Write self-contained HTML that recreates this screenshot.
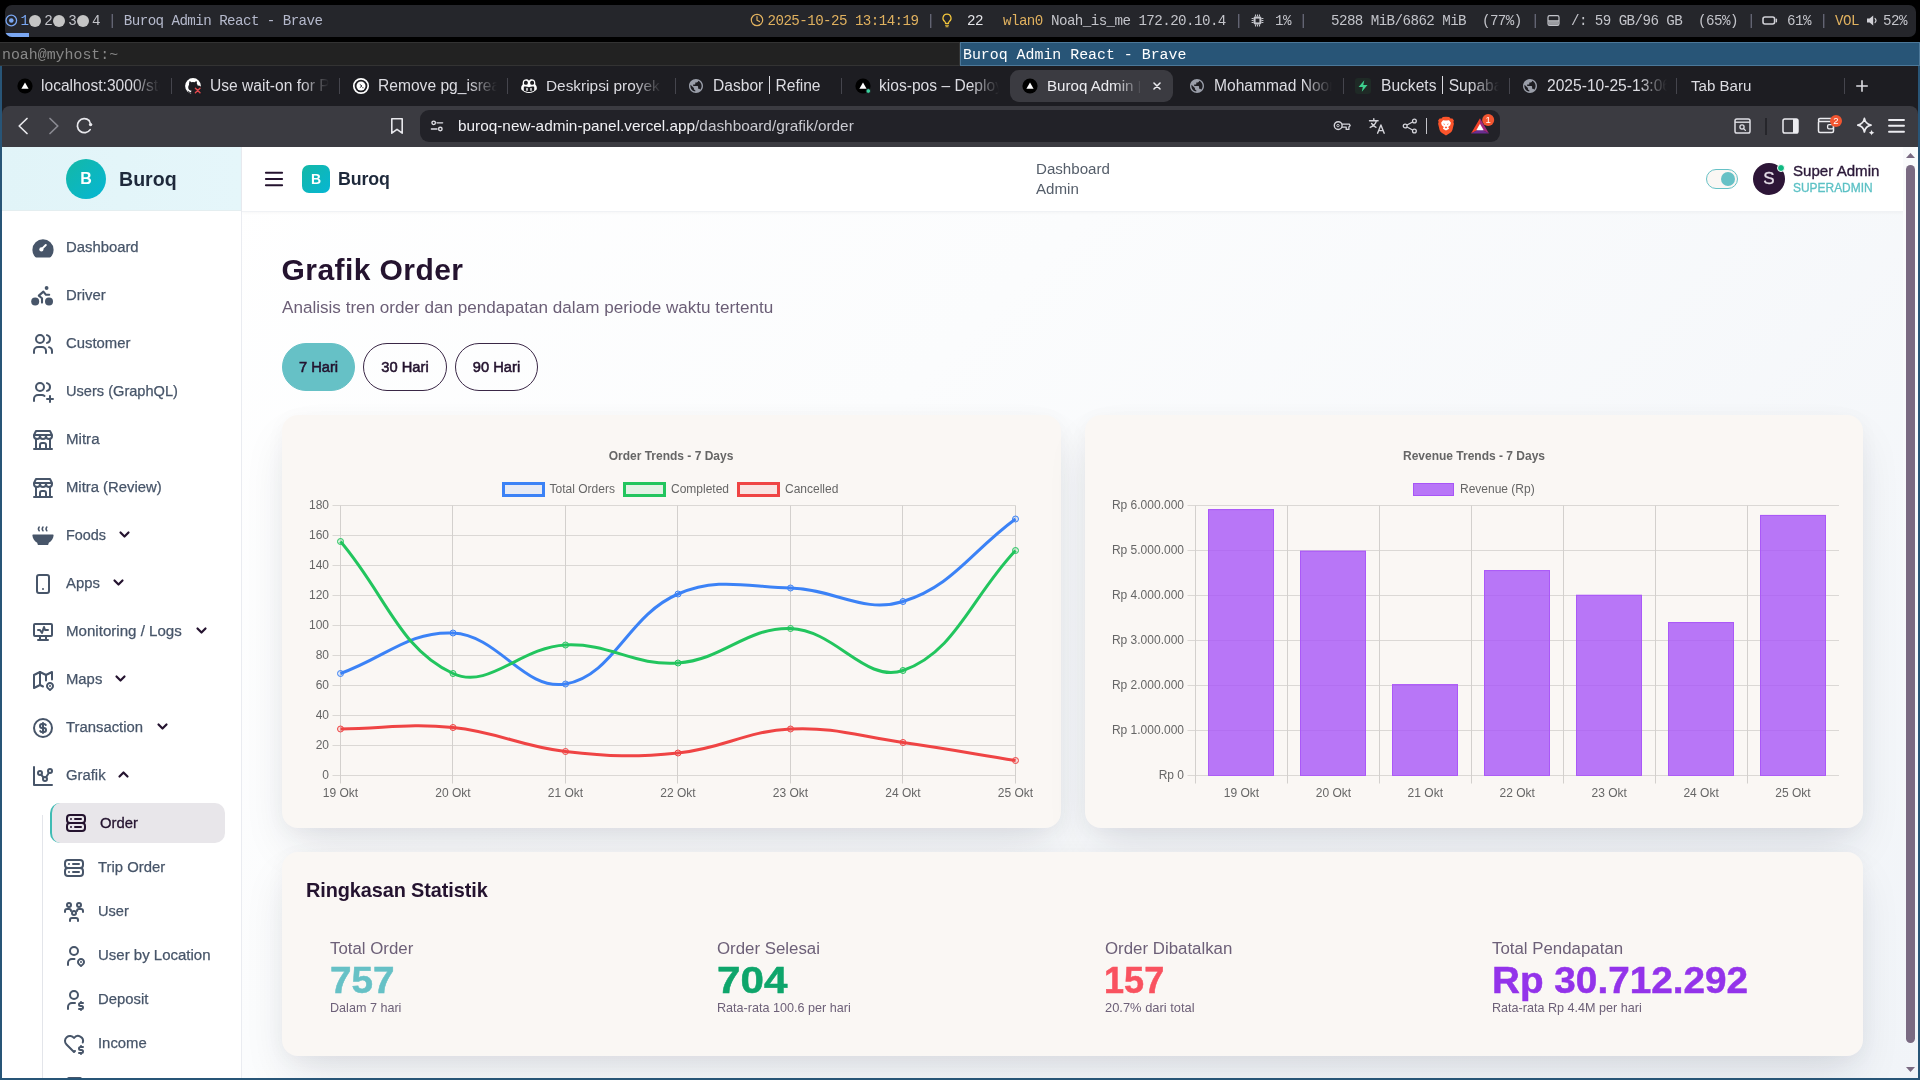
<!DOCTYPE html>
<html lang="id">
<head>
<meta charset="utf-8">
<title>Buroq Admin React</title>
<style>
*{box-sizing:border-box;margin:0;padding:0}
html,body{width:1920px;height:1080px;overflow:hidden;background:#000;font-family:"Liberation Sans",sans-serif;}
#root{position:absolute;left:0;top:0;width:1920px;height:1080px;will-change:transform;background:#000;overflow:hidden}
.abs{position:absolute}
.mono{font-family:"Liberation Mono",monospace;white-space:pre}
svg{display:block;overflow:visible}
svg.chart{position:absolute}
/* ---------- i3 status bar ---------- */
#bar{position:absolute;left:5px;top:5px;width:1911px;height:32px;background:#25262b;border-radius:7px;overflow:hidden}
#bar .t{position:absolute;top:0;height:32px;line-height:33px;font-family:"Liberation Mono",monospace;font-size:14.2px;letter-spacing:-.57px;white-space:pre;color:#b5b9cc}
#bar .y{color:#e0b15f}
#bar .w{color:#e4e4e8}
#bar .g{color:#c3c4ca}
#bar .sep{color:#6e7080}
/* ---------- i3 title row ---------- */
#ttl-l{position:absolute;left:0;top:42px;width:960px;height:24px;background:#222222;border:1px solid #333333;border-left:none}
#ttl-r{position:absolute;left:960px;top:42px;width:960px;height:24px;background:#285577;border:1px solid #4c7899}
.ttl{position:absolute;top:0;line-height:24px;font-family:"Liberation Mono",monospace;font-size:14.9px;white-space:pre}
/* ---------- browser ---------- */
#win{position:absolute;left:0;top:66px;width:1920px;height:1014px;background:#285577}
#tabs{position:absolute;left:2px;top:0;width:1916px;height:52px;background:#1d1d22}
#tool{position:absolute;left:2px;top:40px;width:1916px;height:41px;background:#3b3b41;border-radius:8px 8px 0 0}
.tab{position:absolute;top:0;height:40px;line-height:40px;font-size:15.6px;color:#dcdce2;white-space:nowrap;overflow:hidden}
.tab.fade{-webkit-mask-image:linear-gradient(90deg,#000 0,#000 calc(100% - 28px),transparent 100%);mask-image:linear-gradient(90deg,#000 0,#000 calc(100% - 28px),transparent 100%)}
.tsep{position:absolute;top:12px;width:1px;height:16px;background:#45454d}
.fav{position:absolute}
#url{position:absolute;left:418px;top:4px;width:1080px;height:32px;border-radius:9px;background:#222228}
/* ---------- page ---------- */
#page{position:absolute;left:2px;top:81px;width:1916px;height:931px;background:#fff;overflow:hidden}
#main{position:absolute;left:239px;top:0;width:1664px;height:931px;background:linear-gradient(135deg,#ffffff 0%,#fbfcfd 35%,#f1f4f8 100%)}
#side{position:absolute;left:0;top:0;width:239px;height:931px;background:#fff}
#side:after{content:'';position:absolute;left:239px;top:0;width:1px;height:931px;background:#eaecf1}
#side-h{position:absolute;left:0;top:0;width:239px;height:64px;background:linear-gradient(90deg,#e1f4f8,#e5f6fa);border-bottom:1px solid #e4eef0}
#hdr{position:absolute;left:240px;top:0;width:1663px;height:65px;background:#fff;border-bottom:1px solid #f0f2f5;box-shadow:0 1px 3px rgba(0,0,0,.03)}
.mi{position:absolute;left:64px;font-size:14.85px;color:#475569;white-space:nowrap;line-height:20px;font-weight:400;-webkit-text-stroke:.25px #475569}
.si{position:absolute;left:96px;font-size:14.85px;color:#475569;white-space:nowrap;line-height:20px;-webkit-text-stroke:.25px #475569}
.ico{position:absolute}
.card{position:absolute;background:#faf7f4;border-radius:16px;box-shadow:0 22px 46px -8px rgba(25,30,55,.125),0 4px 20px rgba(25,30,55,.035)}
.btn{position:absolute;top:196px;height:48px;border-radius:24px;font-size:14.7px;font-weight:400;-webkit-text-stroke:.55px #24132f;color:#24132f;text-align:center;line-height:47px;border:1px solid #3a2746}
.ct{position:absolute;font-weight:700;font-size:12px;color:#666;text-align:center;white-space:nowrap}
.lg{position:absolute;font-size:12px;color:#666;white-space:nowrap;line-height:14px}
.lgb{position:absolute;width:43px;height:15px}
.sl{position:absolute;font-size:16.85px;color:#6d6078;white-space:nowrap;line-height:20px}
.sn{position:absolute;font-size:37px;font-weight:700;white-space:nowrap;line-height:40px;transform-origin:0 50%;-webkit-text-stroke:.5px currentColor}
.ss{position:absolute;font-size:12.6px;color:#6d6078;white-space:nowrap;line-height:16px}
</style>
</head>
<body>
<div id="root">
<!-- ===== status bar ===== -->
<div id="bar">
  <div class="abs" style="left:0;top:28px;width:24px;height:4px;background:#7aa7f2"></div>
  <svg class="abs" style="left:0;top:8px" width="14" height="15" viewBox="0 0 14 15"><circle cx="6.3" cy="7.5" r="5.3" fill="none" stroke="#7aa7f2" stroke-width="1.3"/><circle cx="6.3" cy="7.5" r="2.3" fill="#7aa7f2"/></svg>
  <div class="abs" style="left:24px;top:9.5px;width:12px;height:12px;border-radius:50%;background:#c4c4c4"></div>
  <div class="abs" style="left:48px;top:9.5px;width:12px;height:12px;border-radius:50%;background:#c4c4c4"></div>
  <div class="abs" style="left:72px;top:9.5px;width:12px;height:12px;border-radius:50%;background:#c4c4c4"></div>
  <div class="t" style="left:15.5px"><span style="color:#7aa7f2">1</span><span class="g">  2  3  4</span> <span class="sep">|</span> Buroq Admin React - Brave</div>
  <!-- clock -->
  <svg class="abs" style="left:745px;top:8px" width="14" height="14" viewBox="0 0 14 14"><circle cx="7" cy="7" r="5.7" fill="none" stroke="#e0b15f" stroke-width="1.2"/><path d="M7 3.6V7.2L9.4 8.6" fill="none" stroke="#e0b15f" stroke-width="1.2" stroke-linecap="round"/></svg>
  <div class="t y" style="left:762.5px">2025-10-25 13:14:19</div>
  <div class="t sep" style="left:921.5px">|</div>
  <!-- bulb -->
  <svg class="abs" style="left:936px;top:8px" width="12" height="15" viewBox="0 0 12 15"><path d="M6 1.2a4 4 0 0 0-2.3 7.3c.5.4.8.9.8 1.5v.4h3v-.4c0-.6.3-1.1.8-1.5A4 4 0 0 0 6 1.2z" fill="none" stroke="#f0c43c" stroke-width="1.2"/><path d="M4.6 12.2h2.8M5 13.8h2" stroke="#f0c43c" stroke-width="1.1" stroke-linecap="round"/></svg>
  <div class="t w" style="left:962px">22</div>
  <div class="t y" style="left:998px">wlan0</div>
  <div class="t g" style="left:1046px">Noah_is_me 172.20.10.4</div>
  <div class="t sep" style="left:1229.5px">|</div>
  <!-- cpu chip -->
  <svg class="abs" style="left:1246px;top:9px" width="13" height="13" viewBox="0 0 13 13"><rect x="2.6" y="2.6" width="7.8" height="7.8" rx="1.4" fill="#c3c4ca"/><rect x="4.6" y="4.6" width="3.8" height="3.8" fill="#25262b"/><path d="M4.5 0.6v2M6.5 0.6v2M8.5 0.6v2M4.5 10.4v2M6.5 10.4v2M8.5 10.4v2M0.6 4.5h2M0.6 6.5h2M0.6 8.5h2M10.4 4.5h2M10.4 6.5h2M10.4 8.5h2" stroke="#c3c4ca" stroke-width="1.1"/></svg>
  <div class="t g" style="left:1270px">1%</div>
  <div class="t sep" style="left:1294px">|</div>
  <div class="t g" style="left:1326px">5288 MiB/6862 MiB  (77%)</div>
  <div class="t sep" style="left:1526px">|</div>
  <!-- disk -->
  <svg class="abs" style="left:1542px;top:9px" width="13" height="13" viewBox="0 0 13 13"><rect x="1" y="1.6" width="11" height="9.8" rx="1.6" fill="none" stroke="#c3c4ca" stroke-width="1.2"/><path d="M1 6.8h11" stroke="#c3c4ca" stroke-width="1.2"/><rect x="1.6" y="7.2" width="9.8" height="3.6" fill="#c3c4ca" opacity=".75"/></svg>
  <div class="t g" style="left:1566px">/: 59 GB/96 GB  (65%)</div>
  <div class="t sep" style="left:1742px">|</div>
  <!-- battery -->
  <svg class="abs" style="left:1757px;top:10px" width="16" height="11" viewBox="0 0 16 11"><rect x="1" y="2" width="11.6" height="7" rx="2" fill="none" stroke="#d0d0d6" stroke-width="1.6"/><path d="M14.4 4.2v2.6" stroke="#d0d0d6" stroke-width="1.3" stroke-linecap="round"/></svg>
  <div class="t g" style="left:1782px">61%</div>
  <div class="t sep" style="left:1814.5px">|</div>
  <div class="t y" style="left:1830px">VOL</div>
  <!-- speaker -->
  <svg class="abs" style="left:1861px;top:9px" width="12" height="13" viewBox="0 0 12 13"><path d="M1 4.6h2.6L7.2 1.4v10.2L3.6 8.4H1z" fill="#d0d0d6"/><path d="M9 4.4a3 3 0 0 1 0 4.2" fill="none" stroke="#d0d0d6" stroke-width="1.1" stroke-linecap="round"/></svg>
  <div class="t g" style="left:1878px">52%</div>
</div>
<!-- ===== i3 title row ===== -->
<div id="ttl-l"><div class="ttl" style="left:2px;color:#888888">noah@myhost:~</div></div>
<div id="ttl-r"><div class="ttl" style="left:2px;color:#ffffff">Buroq Admin React - Brave</div></div>
<!-- ===== browser window ===== -->
<div id="win">
<div id="tabs">
  <!-- active tab bg -->
  <div class="abs" style="left:1008px;top:4px;width:163px;height:32px;border-radius:9px;background:#3b3b41"></div>
  <!-- favicons (defs) -->
  <svg width="0" height="0" style="position:absolute">
    <defs>
      <g id="f-vercel"><circle cx="8" cy="8" r="7.6" fill="#000"/><path d="M8 4.6l3.6 6.2H4.4z" fill="#fff"/></g>
      <g id="f-globe"><path transform="translate(-.4 -.4) scale(.7)" fill="#9a9ea9" d="M12 2C6.480 2 2 6.480 2 12s4.480 10 10 10 10-4.480 10-10S17.520 2 12 2zm-1 17.930c-3.950-.490-7-3.850-7-7.930 0-.620.080-1.210.210-1.790L9 15v1c0 1.100.9 2 2 2v1.930zm6.900-2.540c-.260-.810-1-1.390-1.900-1.390h-1v-3c0-.550-.450-1-1-1H8v-2h2c.550 0 1-.450 1-1V7h2c1.100 0 2-.9 2-2v-.410c2.930 1.190 5 4.060 5 7.410 0 2.080-.8 3.970-2.100 5.390z"/></g>
    </defs>
  </svg>
  <svg class="fav" style="left:15px;top:12px" width="16" height="16"><use href="#f-vercel"/></svg>
  <div class="tab fade" style="left:39px;width:119px">localhost:3000/store</div>
  <div class="tsep" style="left:169px"></div>

  <svg class="fav" style="left:183px;top:12px" width="18" height="18" viewBox="0 0 18 18"><circle cx="8" cy="8" r="7.900" fill="#fff"/><path d="M4.300 3.300c.9.100 1.600.500 2.100 1a6 6 0 0 1 3.200 0c.5-.5 1.200-.9 2.100-1 .3.800.3 1.500.1 2.100.6.700.9 1.500.9 2.500 0 2.300-1.400 3.300-3.400 3.600.4.400.6.900.6 1.600v3H6.100v-1.300c-1.400.4-2.300-.1-2.900-1.300-.2-.4-.5-.6-.8-.8.800-.2 1.300.1 1.700.7.500.7 1.200.9 2 .6 0-.5.200-.9.500-1.200-2-.3-3.400-1.300-3.400-3.600 0-1 .3-1.800.9-2.500-.2-.6-.2-1.300.2-2.100z" fill="#1d1d22"/><circle cx="12.800" cy="12.600" r="5" fill="#1d1d22"/><path d="M10.400 10.200l4.600 4.600M15 10.200l-4.600 4.600" stroke="#e5484d" stroke-width="1.400" stroke-linecap="round"/></svg>
  <div class="tab fade" style="left:208px;width:119px">Use wait-on for PR</div>
  <div class="tsep" style="left:337px"></div>

  <svg class="fav" style="left:351px;top:12px" width="16" height="16" viewBox="0 0 16 16"><circle cx="8" cy="8" r="7.200" fill="none" stroke="#fff" stroke-width="1.700"/><circle cx="8" cy="8" r="4.500" fill="#fff"/><path d="M6.800 6.400L9 8l-2.200 1.600" fill="none" stroke="#1d1d22" stroke-width=".9"/><path d="M9.200 9.700h1.300" stroke="#1d1d22" stroke-width=".8"/></svg>
  <div class="tab fade" style="left:376px;width:119px">Remove pg_isready</div>
  <div class="tsep" style="left:505px"></div>

  <svg class="fav" style="left:518px;top:12px" width="18" height="17" viewBox="0 0 18 16" preserveAspectRatio="none"><path d="M9 2.600c.8-1.100 2.100-1.500 3.600-1.300 1.700.2 2.700 1.400 2.700 3.200v1.600c.9.900 1.500 1.900 1.500 3v1.500c-1.800 2.200-4.600 3.400-7.800 3.400s-6-1.200-7.800-3.400V9.100c0-1.100.6-2.100 1.500-3V4.500c0-1.800 1-3 2.700-3.200C6.900 1.100 8.200 1.500 9 2.600z" fill="#fff"/><rect x="4" y="2.600" width="3.700" height="3.800" rx="1.500" fill="#1d1d22"/><rect x="10.300" y="2.600" width="3.700" height="3.800" rx="1.500" fill="#1d1d22"/><path d="M3.800 8.200c1.500-.4 3.300-.4 5.200.5 1.900-.9 3.700-.9 5.200-.5v3.600c-1.500.9-3.300 1.400-5.200 1.400s-3.700-.5-5.200-1.400z" fill="#1d1d22"/><path d="M7 9.800v1.800M11 9.800v1.800" stroke="#fff" stroke-width="1.400" stroke-linecap="round"/></svg>
  <div class="tab fade" style="left:544px;width:116px;font-size:15.400px">Deskripsi proyek</div>
  <div class="tsep" style="left:673px"></div>

  <svg class="fav" style="left:686px;top:12px" width="16" height="16"><use href="#f-globe"/></svg>
  <div class="tab" style="left:711px;width:125px">Dasbor <span style="display:inline-block;width:1.500px;height:18px;background:#dcdce2;vertical-align:-3px;margin:0 1px"></span> Refine</div>
  <div class="tsep" style="left:839px"></div>

  <svg class="fav" style="left:853px;top:12px" width="18" height="18" viewBox="0 0 18 18"><circle cx="8" cy="8" r="7.600" fill="#000"/><path d="M8 4.600l3.600 6.200H4.400z" fill="#fff"/><circle cx="13.300" cy="13" r="2.300" fill="#3ad29f" stroke="#1d1d22" stroke-width=".8"/></svg>
  <div class="tab fade" style="left:877px;width:120px">kios-pos – Deployment</div>

  <svg class="fav" style="left:1020px;top:12px" width="16" height="16"><use href="#f-vercel"/></svg>
  <div class="tab fade" style="left:1045px;width:104px;color:#ececf0;-webkit-mask-image:linear-gradient(90deg,#000 0,#000 68px,transparent 96px);mask-image:linear-gradient(90deg,#000 0,#000 68px,transparent 96px);font-size:15.100px">Buroq Admin <span style="font-size:13px;vertical-align:1px">|</span> React</div>
  <svg class="abs" style="left:1151px;top:16px" width="8" height="8" viewBox="0 0 10 10"><path d="M1.200 1.200l7.600 7.600M8.800 1.200L1.200 8.800" stroke="#ececf0" stroke-width="1.900" stroke-linecap="round"/></svg>

  <svg class="fav" style="left:1187px;top:12px" width="16" height="16"><use href="#f-globe"/></svg>
  <div class="tab fade" style="left:1212px;width:118px">Mohammad Noor</div>
  <div class="tsep" style="left:1341px"></div>

  <svg class="fav" style="left:1353px;top:12px" width="16" height="16" viewBox="0 0 16 16"><rect width="16" height="16" rx="3" fill="#1f2a26"/><path d="M9.300 2.200L3.600 9h4.200l-1 4.800L12.500 7H8.300z" fill="#3ecf8e"/></svg>
  <div class="tab fade" style="left:1379px;width:118px">Buckets <span style="display:inline-block;width:1.500px;height:18px;background:#dcdce2;vertical-align:-3px;margin:0 1px"></span> Supabase</div>
  <div class="tsep" style="left:1507px"></div>

  <svg class="fav" style="left:1520px;top:12px" width="16" height="16"><use href="#f-globe"/></svg>
  <div class="tab fade" style="left:1545px;width:120px">2025-10-25-13:06:44</div>
  <div class="tsep" style="left:1674px"></div>

  <div class="tab" style="left:1689px;width:90px;font-size:15.100px">Tab Baru</div>
  <div class="tsep" style="left:1842px"></div>
  <svg class="abs" style="left:1853px;top:13px" width="14" height="14" viewBox="0 0 14 14"><path d="M7 1.200v11.600M1.200 7h11.600" stroke="#dcdce2" stroke-width="1.600"/></svg>
</div>
<div id="tool">
  <svg class="abs" style="left:14px;top:11px" width="14" height="18" viewBox="0 0 14 18"><path d="M11 1.500L3.200 9l7.800 7.500" fill="none" stroke="#e8e8ec" stroke-width="1.700" stroke-linecap="round" stroke-linejoin="round"/></svg>
  <svg class="abs" style="left:45px;top:11px" width="14" height="18" viewBox="0 0 14 18"><path d="M3 1.500L10.800 9 3 16.500" fill="none" stroke="#8a8a92" stroke-width="1.700" stroke-linecap="round" stroke-linejoin="round"/></svg>
  <svg class="abs" style="left:73px;top:11px" width="20" height="18" viewBox="0 0 20 18"><path d="M15.200 12.600A7 7 0 1 1 14.200 3.600" fill="none" stroke="#e8e8ec" stroke-width="1.700" stroke-linecap="round"/><circle cx="15.600" cy="7.600" r="1.700" fill="#e8e8ec"/><path d="M14.200 3.600l1.400 3.400" stroke="#e8e8ec" stroke-width="1.500" stroke-linecap="round"/></svg>
  <svg class="abs" style="left:388px;top:11px" width="14" height="18" viewBox="0 0 14 18"><path d="M1.800 1.800h10.400v14.400L7 12.400 1.800 16.200z" fill="none" stroke="#e8e8ec" stroke-width="1.600" stroke-linejoin="round"/></svg>
  <div id="url">
    <svg class="abs" style="left:9.500px;top:9px" width="14" height="14" viewBox="0 0 16 16"><circle cx="4.200" cy="4.400" r="2" fill="none" stroke="#e0e0e6" stroke-width="1.600"/><path d="M8 4.400h6.400" stroke="#e0e0e6" stroke-width="1.600" stroke-linecap="round"/><circle cx="11.800" cy="11.400" r="2" fill="none" stroke="#e0e0e6" stroke-width="1.600"/><path d="M1.600 11.400H8" stroke="#e0e0e6" stroke-width="1.600" stroke-linecap="round"/></svg>
    <div class="abs" style="left:38px;top:0;line-height:31px;font-size:15.350px;color:#f0f0f4;white-space:nowrap">buroq-new-admin-panel.vercel.app<span style="color:#c9c9d0">/dashboard/grafik/order</span></div>
  </div>
</div>
<!-- toolbar right icons (inside #tool coordinate space, appended via wrapper) -->
<div class="abs" style="left:2px;top:40px;width:1916px;height:41px;pointer-events:none">
  <!-- key -->
  <svg class="abs" style="left:1331px;top:13px" width="18" height="14" viewBox="0 0 18 14"><circle cx="5.200" cy="6.600" r="3.900" fill="none" stroke="#d4d4da" stroke-width="1.400"/><circle cx="5" cy="6.600" r="1.200" fill="none" stroke="#d4d4da" stroke-width=".9"/><path d="M9 5.100h7.300l.9 1.500-1.300 1.400v2.400h-2.700V8.100H9" fill="none" stroke="#d4d4da" stroke-width="1.300" stroke-linejoin="round"/></svg>
  <!-- translate -->
  <svg class="abs" style="left:1366px;top:11px" width="18" height="18" viewBox="0 0 18 18"><path d="M1.500 3.800h8.600M5.800 1.800v2M8.400 3.800c-.6 2.600-2.800 5-6.200 6.600M3.600 6.400c.8 1.600 2.400 3 4.400 3.900" fill="none" stroke="#d4d4da" stroke-width="1.400" stroke-linecap="round"/><path d="M9.600 16.200L12.900 8l3.300 8.200M10.700 13.600h4.400" fill="none" stroke="#d4d4da" stroke-width="1.400" stroke-linecap="round" stroke-linejoin="round"/></svg>
  <!-- share -->
  <svg class="abs" style="left:1400px;top:12px" width="16" height="16" viewBox="0 0 16 16"><circle cx="12.400" cy="3" r="1.900" fill="none" stroke="#d4d4da" stroke-width="1.300"/><circle cx="3.200" cy="8" r="1.900" fill="none" stroke="#d4d4da" stroke-width="1.300"/><circle cx="12.400" cy="13" r="1.900" fill="none" stroke="#d4d4da" stroke-width="1.300"/><path d="M5 7l5.600-3M5 9l5.600 3" stroke="#d4d4da" stroke-width="1.300"/></svg>
  <div class="abs" style="left:1424px;top:12px;width:1px;height:16px;background:#c4c4ca"></div>
  <!-- brave lion -->
  <svg class="abs" style="left:1435px;top:10px" width="18" height="20" viewBox="0 0 18 20"><path d="M9 .8l3.200.2 1.300 1.400 1.900.1 1.500 2-.5 1.500.5 1.700-1.500 6.200c-.3 1.200-1 2.100-2 2.800L9 19.400l-4.400-2.700c-1-.7-1.700-1.600-2-2.800L1.100 7.700l.5-1.700-.5-1.500 1.500-2 1.900-.1L5.800 1z" fill="#fb542b"/><path d="M9 4.600c1 0 2-.5 3.200-.1l1.700 2.300-.7 2.500-2 1.700.9 1.700L9 14.600l-3.100-1.900.9-1.700-2-1.700-.7-2.500 1.700-2.300c1.200-.4 2.200.1 3.200.1z" fill="#fff"/><path d="M6.200 7.600l1.700.5-.6 1zM11.800 7.600l-1.700.5.600 1zM9 10.200l1.300 1.500L9 12.600l-1.300-.9z" fill="#fb542b"/></svg>
  <!-- rewards triangle -->
  <svg class="abs" style="left:1467px;top:7px" width="28" height="24" viewBox="0 0 28 24"><path d="M11 5.300L2 20.600 11 15.700z" fill="#f5432a"/><path d="M11 5.300l9 15.300-9-4.900z" fill="#a3297c"/><path d="M2 20.600h18l-9-4.900z" fill="#6b2d90"/><path d="M11 10.800l3.700 6.500H7.300z" fill="#fff"/><circle cx="19.200" cy="6.900" r="6" fill="#f25530"/><text x="19.200" y="10.300" font-family="Liberation Sans, sans-serif" font-size="9.500" fill="#fff" text-anchor="middle">1</text></svg>
  <!-- screenshot/search tab -->
  <svg class="abs" style="left:1731.500px;top:12px" width="17" height="16" viewBox="0 0 17 16"><rect x="1" y="1" width="15" height="14" rx="1.800" fill="none" stroke="#dedee4" stroke-width="1.500"/><path d="M1 4.200h15" stroke="#dedee4" stroke-width="1.400"/><circle cx="8" cy="9" r="2.100" fill="none" stroke="#dedee4" stroke-width="1.300"/><path d="M9.600 10.600l1.800 1.800" stroke="#dedee4" stroke-width="1.300" stroke-linecap="round"/></svg>
  <div class="abs" style="left:1763px;top:12px;width:1.500px;height:17px;background:#26262b"></div>
  <!-- sidebar -->
  <svg class="abs" style="left:1779.500px;top:12px" width="17" height="16" viewBox="0 0 17 16"><rect x="1" y="1" width="15" height="14" rx="1.800" fill="none" stroke="#ececf0" stroke-width="1.500"/><rect x="11" y="1" width="5" height="14" fill="#ececf0"/></svg>
  <!-- wallet -->
  <svg class="abs" style="left:1814px;top:7px" width="30" height="24" viewBox="0 0 30 24"><path d="M2.500 9V18c0 .9.700 1.500 1.500 1.500h12c.9 0 1.500-.7 1.500-1.500V10c0-.9-.7-1.500-1.500-1.500H4C3.100 8.500 2.500 7.800 2.500 7S3.100 5.500 4 5.500h11" fill="none" stroke="#ececf0" stroke-width="1.500" stroke-linecap="round"/><rect x="11.600" y="11.600" width="5.900" height="4.200" rx="1.400" fill="none" stroke="#ececf0" stroke-width="1.300"/><circle cx="20" cy="7.900" r="6" fill="#f25530"/><text x="20" y="11.300" font-family="Liberation Sans, sans-serif" font-size="9.500" fill="#fff" text-anchor="middle">2</text></svg>
  <!-- leo star -->
  <svg class="abs" style="left:1853px;top:10px" width="22" height="22" viewBox="0 0 22 22"><path d="M9.400 2.400c.7 3.800 2.600 5.900 6.600 6.800-4 .9-5.900 3-6.600 6.800-.7-3.800-2.600-5.900-6.600-6.800 4-.9 5.900-3 6.600-6.800z" fill="none" stroke="#ececf0" stroke-width="1.700" stroke-linejoin="round" stroke-linecap="round"/><path d="M16.600 13.800c.3 1.600 1.100 2.500 2.800 2.900-1.700.4-2.500 1.300-2.800 2.900-.3-1.600-1.100-2.500-2.800-2.900 1.700-.4 2.500-1.300 2.800-2.900z" fill="#ececf0"/></svg>
  <!-- menu -->
  <svg class="abs" style="left:1885.500px;top:12px" width="17" height="15" viewBox="0 0 17 15"><path d="M1 2h15M1 7.800h15M1 13.700h15" stroke="#ececf0" stroke-width="1.900" stroke-linecap="round"/></svg>
</div>
<div id="page">
<div id="main"></div>
<!-- ===== sidebar ===== -->
<div id="side">
  <div id="side-h">
    <div class="abs" style="left:64px;top:12px;width:40px;height:40px;border-radius:50%;background:linear-gradient(135deg,#14b8a6,#06b6d4);color:#fff;font-weight:700;font-size:16px;line-height:40px;text-align:center">B</div>
    <div class="abs" style="left:117px;top:19px;font-size:19.600px;font-weight:700;color:#1e293b;line-height:26px">Buroq</div>
  </div>
  <svg width="0" height="0" style="position:absolute"><defs>
    <g id="i-store" fill="none" stroke="#475569" stroke-width="2" stroke-linecap="round" stroke-linejoin="round"><path d="M3 21h18"/><path d="M3 7v1a3 3 0 0 0 6 0V7m0 1a3 3 0 0 0 6 0V7m0 1a3 3 0 0 0 6 0V7H3l2-4h14l2 4"/><path d="M5 21V10.850"/><path d="M19 21V10.850"/><path d="M9 21v-4a2 2 0 0 1 2-2h2a2 2 0 0 1 2 2v4"/></g>
    <path id="i-chev" d="M1.500 1.500l4 4 4-4" fill="none" stroke="#24132f" stroke-width="2.200" stroke-linecap="round" stroke-linejoin="round"/>
    <g id="i-server" fill="none" stroke-width="2" stroke-linecap="round" stroke-linejoin="round"><rect x="3" y="4" width="18" height="8" rx="3"/><rect x="3" y="12" width="18" height="8" rx="3"/><path d="M7 8v.010M7 16v.010M11 8h6M11 16h6"/></g>
  </defs></svg>

  <!-- Dashboard -->
  <svg class="ico" style="left:28.0px;top:88.5px" width="24" height="24" viewBox="0 0 24 24"><path d="M6.300 21.600a1.500 1.500 0 0 1-1.100-.5 10.600 10.600 0 1 1 15.600 0 1.500 1.500 0 0 1-1.100.5z" fill="#475569"/><circle cx="11.400" cy="13.400" r="2.100" fill="#fff"/><path d="M12.400 12.400l3.400-3.400" stroke="#fff" stroke-width="2" stroke-linecap="round"/></svg>
  <div class="mi" style="top:90px">Dashboard</div>
  <!-- Driver -->
  <svg class="ico" style="left:28px;top:137px" width="24" height="24" viewBox="0 0 24 24"><circle cx="5.200" cy="17.400" r="4" fill="#475569"/><circle cx="19" cy="17.400" r="4" fill="#475569"/><circle cx="16.600" cy="4" r="1.900" fill="#475569"/><path d="M12 18.600v-4.400l-3.200-2.600 4.600-4 2.600 3.200h3.200" fill="none" stroke="#475569" stroke-width="2.100" stroke-linecap="round" stroke-linejoin="round"/></svg>
  <div class="mi" style="top:138px">Driver</div>
  <!-- Customer -->
  <svg class="ico" style="left:28.500px;top:184.5px" width="24" height="24" viewBox="0 0 24 24" fill="none" stroke="#475569" stroke-width="2" stroke-linecap="round" stroke-linejoin="round"><circle cx="9" cy="7" r="4"/><path d="M3 21v-2a4 4 0 0 1 4-4h4a4 4 0 0 1 4 4v2"/><path d="M16 3.130a4 4 0 0 1 0 7.750"/><path d="M21 21v-2a4 4 0 0 0-3-3.850"/></svg>
  <div class="mi" style="top:186px">Customer</div>
  <!-- Users GraphQL -->
  <svg class="ico" style="left:28.500px;top:232.5px" width="24" height="24" viewBox="0 0 24 24" fill="none" stroke="#475569" stroke-width="2" stroke-linecap="round" stroke-linejoin="round"><circle cx="9" cy="7" r="4"/><path d="M3 21v-2a4 4 0 0 1 4-4h4c.960 0 1.840.338 2.530.901"/><path d="M16 3.130a4 4 0 0 1 0 7.750"/><path d="M16 19h6M19 16v6"/></svg>
  <div class="mi" style="top:234px;font-size:14.600px">Users (GraphQL)</div>
  <!-- Mitra -->
  <svg class="ico" style="left:28.500px;top:280.5px" width="24" height="24" viewBox="0 0 24 24"><use href="#i-store"/></svg>
  <div class="mi" style="top:282px;font-size:15.100px">Mitra</div>
  <svg class="ico" style="left:28.500px;top:328.5px" width="24" height="24" viewBox="0 0 24 24"><use href="#i-store"/></svg>
  <div class="mi" style="top:330px">Mitra (Review)</div>
  <!-- Foods -->
  <svg class="ico" style="left:28.500px;top:376.5px" width="24" height="24" viewBox="0 0 24 24"><path d="M2.200 10.600h19.600a.8.800 0 0 1 .8.900c-.3 3.300-2.200 5.800-4.800 7.200l-.5 1.700a1 1 0 0 1-1 .7H7.700a1 1 0 0 1-1-.7l-.5-1.700C3.600 17.300 1.700 14.800 1.400 11.500a.8.800 0 0 1 .8-.9z" fill="#475569"/><path d="M8.200 3c-1 1.200-1 2.600 0 3.800M12 3c-1 1.200-1 2.600 0 3.800M15.800 3c-1 1.200-1 2.600 0 3.800" fill="none" stroke="#475569" stroke-width="1.500" stroke-linecap="round"/></svg>
  <div class="mi" style="top:378px;font-size:14.400px">Foods</div>
  <svg class="ico" style="left:117px;top:384px" width="11" height="7" viewBox="0 0 11 7"><use href="#i-chev"/></svg>
  <!-- Apps -->
  <svg class="ico" style="left:28.500px;top:424.5px" width="24" height="24" viewBox="0 0 24 24" fill="none" stroke="#475569" stroke-width="2" stroke-linecap="round" stroke-linejoin="round"><rect x="6" y="3" width="12" height="18" rx="2"/><path d="M12 17v.010"/></svg>
  <div class="mi" style="top:426px">Apps</div>
  <svg class="ico" style="left:111px;top:432px" width="11" height="7" viewBox="0 0 11 7"><use href="#i-chev"/></svg>
  <!-- Monitoring -->
  <svg class="ico" style="left:28.500px;top:472.5px" width="24" height="24" viewBox="0 0 24 24" fill="none" stroke="#475569" stroke-width="2" stroke-linecap="round" stroke-linejoin="round"><rect x="3" y="4" width="18" height="12" rx="1"/><path d="M7 20h10M9 16v4M15 16v4"/><path d="M7 10h2l2 3 2-6 1 3h3"/></svg>
  <div class="mi" style="top:474px;font-size:15.100px">Monitoring / Logs</div>
  <svg class="ico" style="left:194px;top:480px" width="11" height="7" viewBox="0 0 11 7"><use href="#i-chev"/></svg>
  <!-- Maps -->
  <svg class="ico" style="left:28.500px;top:520.5px" width="24" height="24" viewBox="0 0 24 24" fill="none" stroke="#475569" stroke-width="2" stroke-linecap="round" stroke-linejoin="round"><path d="M12 18.500l-3-1.500-6 3V7l6-3 6 3 6-3v7.500"/><path d="M9 4v13M15 7v5.500"/><path d="M21.121 20.121a3 3 0 1 0-4.242 0c.418.419 1.125 1.045 2.121 1.879 1.051-.89 1.759-1.516 2.121-1.879z"/><path d="M19 18v.010"/></svg>
  <div class="mi" style="top:522px">Maps</div>
  <svg class="ico" style="left:113px;top:528px" width="11" height="7" viewBox="0 0 11 7"><use href="#i-chev"/></svg>
  <!-- Transaction -->
  <svg class="ico" style="left:28.500px;top:568.5px" width="24" height="24" viewBox="0 0 24 24" fill="none" stroke="#475569" stroke-width="2" stroke-linecap="round" stroke-linejoin="round"><circle cx="12" cy="12" r="9"/><path d="M14.800 9A2 2 0 0 0 13 8h-2a2 2 0 1 0 0 4h2a2 2 0 1 1 0 4h-2a2 2 0 0 1-1.800-1M12 7v10"/></svg>
  <div class="mi" style="top:570px">Transaction</div>
  <svg class="ico" style="left:155px;top:576px" width="11" height="7" viewBox="0 0 11 7"><use href="#i-chev"/></svg>
  <!-- Grafik -->
  <svg class="ico" style="left:28.500px;top:616.5px" width="24" height="24" viewBox="0 0 24 24" fill="none" stroke="#475569" stroke-width="2" stroke-linecap="round" stroke-linejoin="round"><path d="M3 3v18h18"/><circle cx="9" cy="9" r="2"/><circle cx="19" cy="7" r="2"/><circle cx="14" cy="15" r="2"/><path d="M10.160 10.620l2.340 2.880M15.088 13.328l2.837-4.586"/></svg>
  <div class="mi" style="top:618px">Grafik</div>
  <svg class="ico" style="left:116px;top:624px" width="11" height="7" viewBox="0 0 11 7"><path d="M1.500 5.500l4-4 4 4" fill="none" stroke="#24132f" stroke-width="2.200" stroke-linecap="round" stroke-linejoin="round"/></svg>

  <!-- submenu -->
  <div class="abs" style="left:40px;top:668px;width:1px;height:263px;background:#e3e5ea"></div>
  <div class="abs" style="left:48px;top:656px;width:175px;height:40px;border-radius:10px;background:#e8e6ea;border-left:2px solid #3fbcb4"></div>
  <svg class="ico" style="left:62px;top:664px" width="24" height="24" viewBox="0 0 24 24" stroke="#24132f"><use href="#i-server"/></svg>
  <div class="si" style="left:98px;top:666px;color:#24132f;-webkit-text-stroke:.3px #24132f">Order</div>
  <svg class="ico" style="left:60.4px;top:708.5px" width="24" height="24" viewBox="0 0 24 24" stroke="#475569"><use href="#i-server"/></svg>
  <div class="si" style="top:710px">Trip Order</div>
  <svg class="ico" style="left:60.4px;top:752.5px" width="24" height="24" viewBox="0 0 24 24" fill="none" stroke="#475569" stroke-width="2" stroke-linecap="round" stroke-linejoin="round"><circle cx="12" cy="13" r="2"/><circle cx="17" cy="5" r="2"/><circle cx="7" cy="5" r="2"/><path d="M8 21v-1a2 2 0 0 1 2-2h4a2 2 0 0 1 2 2v1M15 11a2 2 0 0 1 2-2h2a2 2 0 0 1 2 2v1M3 12v-1a2 2 0 0 1 2-2h2a2 2 0 0 1 2 2"/></svg>
  <div class="si" style="top:754px;font-size:14.600px">User</div>
  <svg class="ico" style="left:60.4px;top:796.5px" width="24" height="24" viewBox="0 0 24 24" fill="none" stroke="#475569" stroke-width="2" stroke-linecap="round" stroke-linejoin="round"><circle cx="12" cy="7" r="4"/><path d="M6 21v-2a4 4 0 0 1 4-4h2.500"/><path d="M21.121 20.121a3 3 0 1 0-4.242 0c.418.419 1.125 1.045 2.121 1.879 1.051-.89 1.759-1.516 2.121-1.879z"/><path d="M19 18v.010"/></svg>
  <div class="si" style="top:798px;font-size:15px">User by Location</div>
  <svg class="ico" style="left:60.4px;top:840.5px" width="24" height="24" viewBox="0 0 24 24" fill="none" stroke="#475569" stroke-width="2" stroke-linecap="round" stroke-linejoin="round"><circle cx="12" cy="7" r="4"/><path d="M6 21v-2a4 4 0 0 1 4-4h3"/><path d="M21 15h-2.500a1.500 1.500 0 0 0 0 3h1a1.500 1.500 0 0 1 0 3H17M19 21v1m0-8v1"/></svg>
  <div class="si" style="top:842px">Deposit</div>
  <svg class="ico" style="left:60.4px;top:884.5px" width="24" height="24" viewBox="0 0 24 24" fill="none" stroke="#475569" stroke-width="2" stroke-linecap="round" stroke-linejoin="round"><path d="M13 19l-1 1-7.500-7.428A5 5 0 1 1 12 6.006a5 5 0 0 1 8.773 4.510"/><path d="M21 15h-2.500a1.500 1.500 0 0 0 0 3h1a1.500 1.500 0 0 1 0 3H17M19 21v1m0-8v1"/></svg>
  <div class="si" style="top:886px">Income</div>
  <div class="abs" style="left:64.500px;top:929.600px;width:15px;height:2px;border-radius:2px 2px 0 0;background:#475569"></div>
</div>
<!-- ===== header ===== -->
<div id="hdr">
  <svg class="abs" style="left:23px;top:24px" width="18" height="16" viewBox="0 0 18 16"><path d="M.9 1.700h16.200M.9 8h16.200M.9 14.300h16.200" stroke="#24132f" stroke-width="2" stroke-linecap="round"/></svg>
  <div class="abs" style="left:60px;top:18px;width:28px;height:28px;border-radius:7px;background:linear-gradient(135deg,#14b8a6,#06b6d4);color:#fff;font-weight:700;font-size:14px;line-height:28px;text-align:center">B</div>
  <div class="abs" style="left:96px;top:20px;font-size:17.800px;font-weight:700;color:#1e293b;line-height:24px;letter-spacing:-.1px">Buroq</div>
  <div class="abs" style="left:794px;top:12px;font-size:15.100px;color:#555e6a;line-height:20px">Dashboard<br>Admin</div>
  <!-- toggle -->
  <div class="abs" style="left:1464px;top:22px;width:32px;height:20px;border-radius:10px;background:#faf7f4;border:1px solid #66c1c6"></div>
  <div class="abs" style="left:1479px;top:25px;width:14px;height:14px;border-radius:50%;background:#66c1c6"></div>
  <!-- avatar -->
  <div class="abs" style="left:1511px;top:16px;width:32px;height:32px;border-radius:50%;background:#2d1537;color:#e6dfe9;font-size:17px;line-height:32px;text-align:center;-webkit-text-stroke:.3px #e6dfe9">S</div>
  <div class="abs" style="left:1535px;top:17px;width:8px;height:8px;border-radius:50%;background:#10b981;border:1.500px solid #fff"></div>
  <div class="abs" style="left:1551px;top:14px;font-size:15.100px;color:#2a1838;line-height:20px;white-space:nowrap;-webkit-text-stroke:.35px #2a1838">Super Admin</div>
  <div class="abs" style="left:1551px;top:33px;font-size:11.950px;color:#5cc1c5;line-height:16px;white-space:nowrap;-webkit-text-stroke:.3px #5cc1c5">SUPERADMIN</div>
</div>

<!-- ===== main content ===== -->
<div class="abs" style="left:279.600px;top:104.200px;font-size:30px;font-weight:700;color:#24132f;line-height:38px;white-space:nowrap;letter-spacing:.42px">Grafik Order</div>
<div class="abs" style="left:280px;top:150.500px;font-size:17.100px;color:#6b5e76;line-height:20px;white-space:nowrap">Analisis tren order dan pendapatan dalam periode waktu tertentu</div>
<div class="btn" style="left:280px;width:73px;background:#66c1c6;border-color:#66c1c6">7 Hari</div>
<div class="btn" style="left:361px;width:84px">30 Hari</div>
<div class="btn" style="left:453px;width:83px">90 Hari</div>

<!-- card 1 -->
<div class="card" style="left:280px;top:268px;width:779px;height:413px"></div>
<div class="card" style="left:1083px;top:268px;width:778px;height:413px"></div>
<div class="card" style="left:280px;top:705px;width:1581px;height:204px"></div>

<div class="ct" style="left:279.500px;top:302px;width:779px">Order Trends - 7 Days</div>
<div class="lgb" style="left:500px;top:334.500px;background:rgba(59,130,246,.1);border:3px solid #3b82f6"></div>
<div class="lg" style="left:547.600px;top:335px">Total Orders</div>
<div class="lgb" style="left:621px;top:334.500px;background:rgba(34,197,94,.1);border:3px solid #22c55e"></div>
<div class="lg" style="left:669px;top:335px">Completed</div>
<div class="lgb" style="left:735px;top:334.500px;background:rgba(239,68,68,.1);border:3px solid #ef4444"></div>
<div class="lg" style="left:783px;top:335px">Cancelled</div>

<div class="ct" style="left:1083px;top:302px;width:778px">Revenue Trends - 7 Days</div>
<div class="lgb" style="left:1411px;top:335.500px;width:41px;height:13px;background:rgba(168,85,247,.8);border:1px solid #a855f7"></div>
<div class="lg" style="left:1458px;top:335px">Revenue (Rp)</div>
<div class="abs" style="left:-2px;top:-147px;width:0;height:0">
<svg class="chart" style="left:282px;top:415px" width="779" height="413" viewBox="282 415 779 413">
<line x1="332.5" y1="775.5" x2="1015.5" y2="775.5" stroke="#dbd8d5" stroke-width="1"/>
<line x1="332.5" y1="745.5" x2="1015.5" y2="745.5" stroke="#dbd8d5" stroke-width="1"/>
<line x1="332.5" y1="715.5" x2="1015.5" y2="715.5" stroke="#dbd8d5" stroke-width="1"/>
<line x1="332.5" y1="685.5" x2="1015.5" y2="685.5" stroke="#dbd8d5" stroke-width="1"/>
<line x1="332.5" y1="655.5" x2="1015.5" y2="655.5" stroke="#dbd8d5" stroke-width="1"/>
<line x1="332.5" y1="625.5" x2="1015.5" y2="625.5" stroke="#dbd8d5" stroke-width="1"/>
<line x1="332.5" y1="595.5" x2="1015.5" y2="595.5" stroke="#dbd8d5" stroke-width="1"/>
<line x1="332.5" y1="565.5" x2="1015.5" y2="565.5" stroke="#dbd8d5" stroke-width="1"/>
<line x1="332.5" y1="535.5" x2="1015.5" y2="535.5" stroke="#dbd8d5" stroke-width="1"/>
<line x1="332.5" y1="505.5" x2="1015.5" y2="505.5" stroke="#dbd8d5" stroke-width="1"/>
<line x1="340.5" y1="505.5" x2="340.5" y2="783.5" stroke="#d3d0cd" stroke-width="1"/>
<line x1="452.5" y1="505.5" x2="452.5" y2="783.5" stroke="#d3d0cd" stroke-width="1"/>
<line x1="565.5" y1="505.5" x2="565.5" y2="783.5" stroke="#d3d0cd" stroke-width="1"/>
<line x1="677.5" y1="505.5" x2="677.5" y2="783.5" stroke="#d3d0cd" stroke-width="1"/>
<line x1="790.5" y1="505.5" x2="790.5" y2="783.5" stroke="#d3d0cd" stroke-width="1"/>
<line x1="902.5" y1="505.5" x2="902.5" y2="783.5" stroke="#d3d0cd" stroke-width="1"/>
<line x1="1015.5" y1="505.5" x2="1015.5" y2="783.5" stroke="#d3d0cd" stroke-width="1"/>
<g font-family="Liberation Sans, sans-serif" font-size="12" fill="#666">
<text x="329.0" y="779.2" text-anchor="end">0</text>
<text x="329.0" y="749.2" text-anchor="end">20</text>
<text x="329.0" y="719.2" text-anchor="end">40</text>
<text x="329.0" y="689.2" text-anchor="end">60</text>
<text x="329.0" y="659.2" text-anchor="end">80</text>
<text x="329.0" y="629.2" text-anchor="end">100</text>
<text x="329.0" y="599.2" text-anchor="end">120</text>
<text x="329.0" y="569.2" text-anchor="end">140</text>
<text x="329.0" y="539.2" text-anchor="end">160</text>
<text x="329.0" y="509.2" text-anchor="end">180</text>
<text x="340.5" y="796.9" text-anchor="middle">19 Okt</text>
<text x="453.0" y="796.9" text-anchor="middle">20 Okt</text>
<text x="565.5" y="796.9" text-anchor="middle">21 Okt</text>
<text x="678.0" y="796.9" text-anchor="middle">22 Okt</text>
<text x="790.5" y="796.9" text-anchor="middle">23 Okt</text>
<text x="903.0" y="796.9" text-anchor="middle">24 Okt</text>
<text x="1015.5" y="796.9" text-anchor="middle">25 Okt</text>
</g>
<path d="M340.50 673.50 C385.50 657.30 408.73 630.93 453.00 633.00 C498.73 635.13 523.96 691.20 565.50 684.00 C613.96 675.60 627.49 615.55 678.00 594.00 C717.49 577.15 745.63 586.50 790.50 588.00 C835.63 589.50 862.66 613.87 903.00 601.50 C952.66 586.27 970.50 552.00 1015.50 519.00" fill="none" stroke="#3b82f6" stroke-width="3" stroke-linecap="butt" stroke-linejoin="miter"/>
<path d="M340.50 541.50 C385.50 594.30 399.08 648.70 453.00 673.50 C489.08 690.10 520.08 647.12 565.50 645.00 C610.08 642.92 633.73 666.25 678.00 663.00 C723.73 659.65 745.96 627.02 790.50 628.50 C835.96 630.02 865.02 683.67 903.00 670.50 C955.02 652.47 970.50 598.50 1015.50 550.50" fill="none" stroke="#22c55e" stroke-width="3" stroke-linecap="butt" stroke-linejoin="miter"/>
<path d="M340.50 729.00 C385.50 728.40 408.50 723.05 453.00 727.50 C498.50 732.05 520.00 746.34 565.50 751.50 C610.00 756.54 633.50 757.45 678.00 753.00 C723.50 748.45 745.16 731.12 790.50 729.00 C835.16 726.92 858.12 736.22 903.00 742.50 C948.12 748.82 970.50 753.30 1015.50 760.50" fill="none" stroke="#ef4444" stroke-width="3" stroke-linecap="butt" stroke-linejoin="miter"/>
<circle cx="340.50" cy="673.50" r="3" fill="#3b82f6" fill-opacity="0.15" stroke="#3b82f6" stroke-width="1"/>
<circle cx="453.00" cy="633.00" r="3" fill="#3b82f6" fill-opacity="0.15" stroke="#3b82f6" stroke-width="1"/>
<circle cx="565.50" cy="684.00" r="3" fill="#3b82f6" fill-opacity="0.15" stroke="#3b82f6" stroke-width="1"/>
<circle cx="678.00" cy="594.00" r="3" fill="#3b82f6" fill-opacity="0.15" stroke="#3b82f6" stroke-width="1"/>
<circle cx="790.50" cy="588.00" r="3" fill="#3b82f6" fill-opacity="0.15" stroke="#3b82f6" stroke-width="1"/>
<circle cx="903.00" cy="601.50" r="3" fill="#3b82f6" fill-opacity="0.15" stroke="#3b82f6" stroke-width="1"/>
<circle cx="1015.50" cy="519.00" r="3" fill="#3b82f6" fill-opacity="0.15" stroke="#3b82f6" stroke-width="1"/>
<circle cx="340.50" cy="541.50" r="3" fill="#22c55e" fill-opacity="0.15" stroke="#22c55e" stroke-width="1"/>
<circle cx="453.00" cy="673.50" r="3" fill="#22c55e" fill-opacity="0.15" stroke="#22c55e" stroke-width="1"/>
<circle cx="565.50" cy="645.00" r="3" fill="#22c55e" fill-opacity="0.15" stroke="#22c55e" stroke-width="1"/>
<circle cx="678.00" cy="663.00" r="3" fill="#22c55e" fill-opacity="0.15" stroke="#22c55e" stroke-width="1"/>
<circle cx="790.50" cy="628.50" r="3" fill="#22c55e" fill-opacity="0.15" stroke="#22c55e" stroke-width="1"/>
<circle cx="903.00" cy="670.50" r="3" fill="#22c55e" fill-opacity="0.15" stroke="#22c55e" stroke-width="1"/>
<circle cx="1015.50" cy="550.50" r="3" fill="#22c55e" fill-opacity="0.15" stroke="#22c55e" stroke-width="1"/>
<circle cx="340.50" cy="729.00" r="3" fill="#ef4444" fill-opacity="0.15" stroke="#ef4444" stroke-width="1"/>
<circle cx="453.00" cy="727.50" r="3" fill="#ef4444" fill-opacity="0.15" stroke="#ef4444" stroke-width="1"/>
<circle cx="565.50" cy="751.50" r="3" fill="#ef4444" fill-opacity="0.15" stroke="#ef4444" stroke-width="1"/>
<circle cx="678.00" cy="753.00" r="3" fill="#ef4444" fill-opacity="0.15" stroke="#ef4444" stroke-width="1"/>
<circle cx="790.50" cy="729.00" r="3" fill="#ef4444" fill-opacity="0.15" stroke="#ef4444" stroke-width="1"/>
<circle cx="903.00" cy="742.50" r="3" fill="#ef4444" fill-opacity="0.15" stroke="#ef4444" stroke-width="1"/>
<circle cx="1015.50" cy="760.50" r="3" fill="#ef4444" fill-opacity="0.15" stroke="#ef4444" stroke-width="1"/>
</svg>
<svg class="chart" style="left:1085px;top:415px" width="778" height="413" viewBox="1085 415 778 413">
<line x1="1187.5" y1="775.5" x2="1839.0" y2="775.5" stroke="#dbd8d5" stroke-width="1"/>
<line x1="1187.5" y1="730.5" x2="1839.0" y2="730.5" stroke="#dbd8d5" stroke-width="1"/>
<line x1="1187.5" y1="685.5" x2="1839.0" y2="685.5" stroke="#dbd8d5" stroke-width="1"/>
<line x1="1187.5" y1="640.5" x2="1839.0" y2="640.5" stroke="#dbd8d5" stroke-width="1"/>
<line x1="1187.5" y1="595.5" x2="1839.0" y2="595.5" stroke="#dbd8d5" stroke-width="1"/>
<line x1="1187.5" y1="550.5" x2="1839.0" y2="550.5" stroke="#dbd8d5" stroke-width="1"/>
<line x1="1187.5" y1="505.5" x2="1839.0" y2="505.5" stroke="#dbd8d5" stroke-width="1"/>
<line x1="1195.5" y1="505.5" x2="1195.5" y2="783.5" stroke="#d3d0cd" stroke-width="1"/>
<line x1="1287.5" y1="505.5" x2="1287.5" y2="783.5" stroke="#d3d0cd" stroke-width="1"/>
<line x1="1379.5" y1="505.5" x2="1379.5" y2="783.5" stroke="#d3d0cd" stroke-width="1"/>
<line x1="1471.5" y1="505.5" x2="1471.5" y2="783.5" stroke="#d3d0cd" stroke-width="1"/>
<line x1="1563.5" y1="505.5" x2="1563.5" y2="783.5" stroke="#d3d0cd" stroke-width="1"/>
<line x1="1655.5" y1="505.5" x2="1655.5" y2="783.5" stroke="#d3d0cd" stroke-width="1"/>
<line x1="1747.5" y1="505.5" x2="1747.5" y2="783.5" stroke="#d3d0cd" stroke-width="1"/>
<g font-family="Liberation Sans, sans-serif" font-size="12" fill="#666">
<text x="1184.0" y="779.2" text-anchor="end">Rp 0</text>
<text x="1184.0" y="734.2" text-anchor="end">Rp 1.000.000</text>
<text x="1184.0" y="689.2" text-anchor="end">Rp 2.000.000</text>
<text x="1184.0" y="644.2" text-anchor="end">Rp 3.000.000</text>
<text x="1184.0" y="599.2" text-anchor="end">Rp 4.000.000</text>
<text x="1184.0" y="554.2" text-anchor="end">Rp 5.000.000</text>
<text x="1184.0" y="509.2" text-anchor="end">Rp 6.000.000</text>
<text x="1241.5" y="796.9" text-anchor="middle">19 Okt</text>
<text x="1333.4" y="796.9" text-anchor="middle">20 Okt</text>
<text x="1425.3" y="796.9" text-anchor="middle">21 Okt</text>
<text x="1517.2" y="796.9" text-anchor="middle">22 Okt</text>
<text x="1609.2" y="796.9" text-anchor="middle">23 Okt</text>
<text x="1701.1" y="796.9" text-anchor="middle">24 Okt</text>
<text x="1793.0" y="796.9" text-anchor="middle">25 Okt</text>
</g>
<rect x="1208.00" y="509.10" width="66.00" height="266.40" fill="#a855f7" fill-opacity="0.8"/>
<rect x="1208.50" y="509.60" width="65.00" height="265.90" fill="none" stroke="#a855f7" stroke-opacity=".9" stroke-width="1"/>
<rect x="1300.00" y="550.73" width="66.00" height="224.77" fill="#a855f7" fill-opacity="0.8"/>
<rect x="1300.50" y="551.23" width="65.00" height="224.27" fill="none" stroke="#a855f7" stroke-opacity=".9" stroke-width="1"/>
<rect x="1392.00" y="684.15" width="66.00" height="91.35" fill="#a855f7" fill-opacity="0.8"/>
<rect x="1392.50" y="684.65" width="65.00" height="90.85" fill="none" stroke="#a855f7" stroke-opacity=".9" stroke-width="1"/>
<rect x="1484.00" y="570.07" width="66.00" height="205.43" fill="#a855f7" fill-opacity="0.8"/>
<rect x="1484.50" y="570.57" width="65.00" height="204.93" fill="none" stroke="#a855f7" stroke-opacity=".9" stroke-width="1"/>
<rect x="1576.00" y="594.83" width="66.00" height="180.67" fill="#a855f7" fill-opacity="0.8"/>
<rect x="1576.50" y="595.33" width="65.00" height="180.17" fill="none" stroke="#a855f7" stroke-opacity=".9" stroke-width="1"/>
<rect x="1668.00" y="622.05" width="66.00" height="153.45" fill="#a855f7" fill-opacity="0.8"/>
<rect x="1668.50" y="622.55" width="65.00" height="152.95" fill="none" stroke="#a855f7" stroke-opacity=".9" stroke-width="1"/>
<rect x="1760.00" y="514.95" width="66.00" height="260.55" fill="#a855f7" fill-opacity="0.8"/>
<rect x="1760.50" y="515.45" width="65.00" height="260.05" fill="none" stroke="#a855f7" stroke-opacity=".9" stroke-width="1"/>
</svg>
</div>
<div class="abs" style="left:304px;top:730px;font-size:19.900px;font-weight:700;color:#24132f;line-height:26px;white-space:nowrap;letter-spacing:-.1px">Ringkasan Statistik</div>
<div class="sl" style="left:328px;top:792px">Total Order</div>
<div class="sn" style="left:327.500px;top:814px;color:#66c1c6;transform:scaleX(1.045)">757</div>
<div class="ss" style="left:328px;top:853px">Dalam 7 hari</div>
<div class="sl" style="left:715px;top:792px">Order Selesai</div>
<div class="sn" style="left:714.500px;top:814px;color:#0ea56b;transform:scaleX(1.140)">704</div>
<div class="ss" style="left:715px;top:853px">Rata-rata 100.6 per hari</div>
<div class="sl" style="left:1103px;top:792px">Order Dibatalkan</div>
<div class="sn" style="left:1102px;top:814px;color:#f9525f;transform:scaleX(.975)">157</div>
<div class="ss" style="left:1103px;top:853px;font-size:12.900px">20.7% dari total</div>
<div class="sl" style="left:1490px;top:792px">Total Pendapatan</div>
<div class="sn" style="left:1489.500px;top:814px;color:#9333ea;transform:scaleX(1.046)">Rp 30.712.292</div>
<div class="ss" style="left:1490px;top:853px">Rata-rata Rp 4.4M per hari</div>

<!-- scrollbar -->
<div class="abs" style="left:1901px;top:0;width:15px;height:931px;background:linear-gradient(180deg,#fafbfc,#f1f4f8)"></div>
<svg class="abs" style="left:1903px;top:5px" width="11" height="7" viewBox="0 0 11 7"><path d="M5.500 1L10 6H1z" fill="#7a6a82"/></svg>
<div class="abs" style="left:1904px;top:18px;width:9px;height:878px;border-radius:5px;background:#7a6a82"></div>
<svg class="abs" style="left:1903px;top:919px" width="11" height="7" viewBox="0 0 11 7"><path d="M5.500 6L10 1H1z" fill="#7a6a82"/></svg>
</div><!-- /page -->
</div><!-- /win -->
</div><!-- /root -->
</body>
</html>
